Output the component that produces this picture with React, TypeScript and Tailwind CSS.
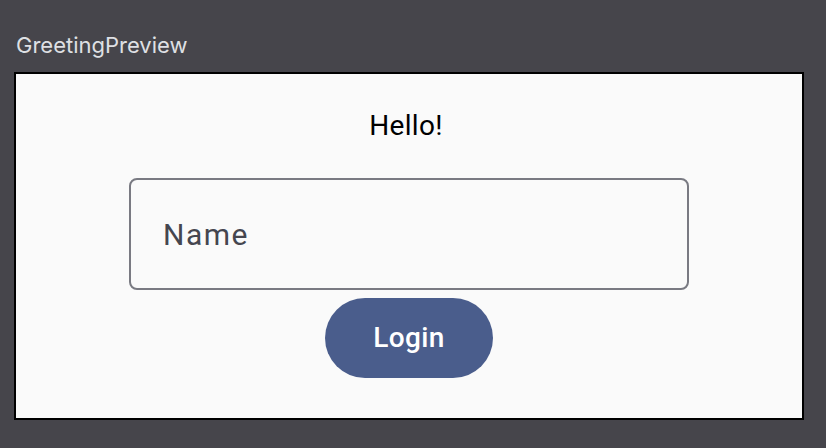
export default function App() {
  return (
    <div className="h-[448px] w-[826px] bg-[#46454b] pl-[14px] pt-[31px]" style={{ fontFamily: "Inter, 'Noto Sans', sans-serif" }}>
      <div className="pl-[2px] text-[22px] leading-[28px] text-[#dfe0e4]">GreetingPreview</div>
      <div className="mt-[13px] flex h-[348px] w-[790px] flex-col items-center border-2 border-black bg-[#fafafa] pt-[36px]" style={{ fontFamily: "Roboto, sans-serif" }}>
        <div className="-ml-[6px] text-[28px] leading-[32px] tracking-[0.3px] text-black">Hello!</div>
        <div className="mt-[36px] flex h-[112px] w-[560px] items-center rounded-[8px] border-2 border-[#797a82] pl-[32px]">
          <span className="text-[30px] tracking-[1.5px] text-[#45464f]">Name</span>
        </div>
        <button className="mt-[8px] flex h-[80px] w-[168px] items-center justify-center rounded-full bg-[#4a5d8c] text-[28px] font-medium tracking-[0.4px] text-white">
          Login
        </button>
      </div>
    </div>
  );
}
